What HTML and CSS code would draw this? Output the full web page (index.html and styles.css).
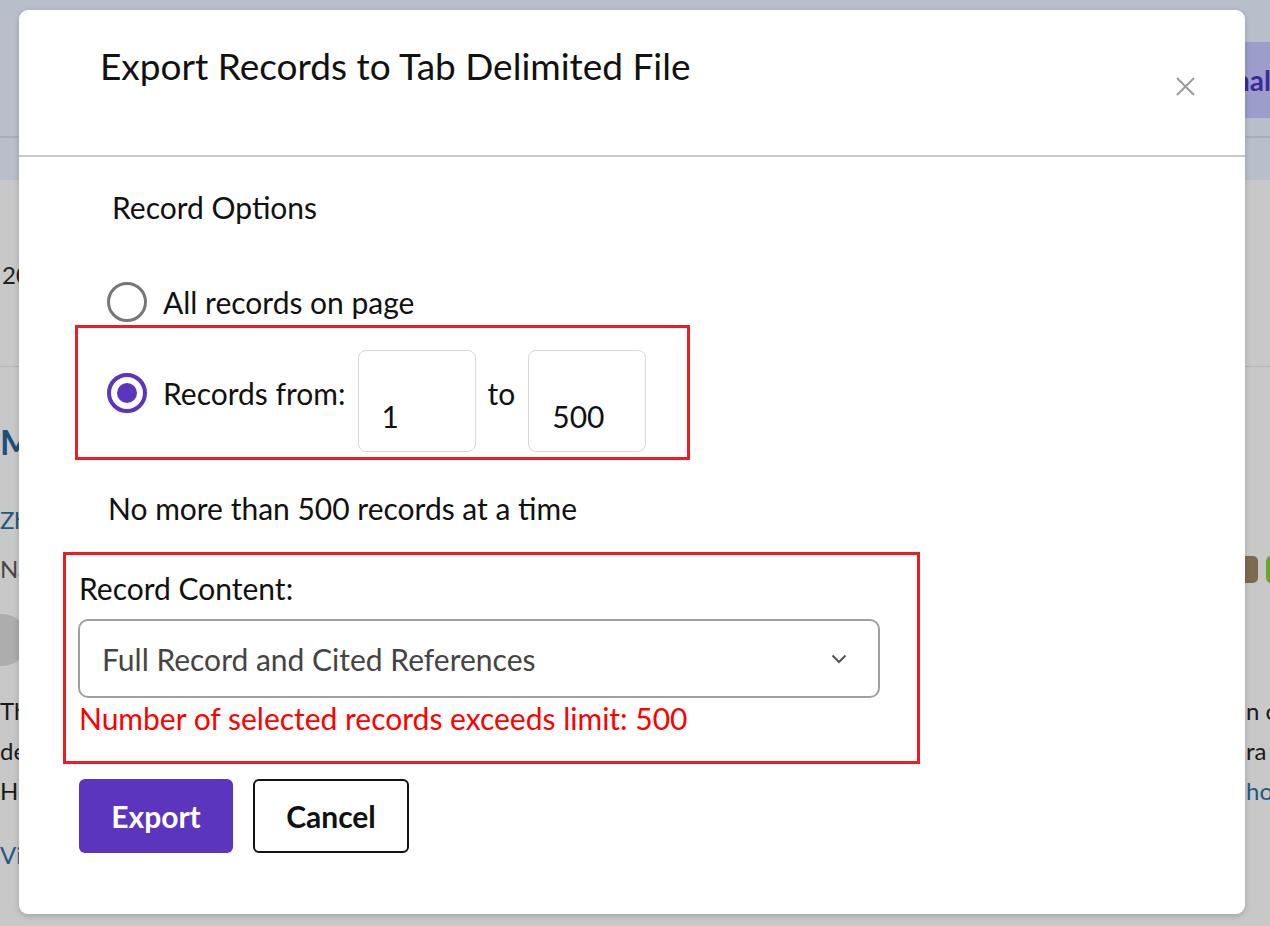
FILE: index.html
```html
<!DOCTYPE html>
<html lang="en">
<head>
<meta charset="utf-8">
<title>Export Records to Tab Delimited File</title>
<link rel="stylesheet" href="styles.css">
</head>
<body>
<div class="page">
  <header class="top">
    <div class="top-main">
      <span class="top-btn">Journal</span>
    </div>
    <div class="top-sub"></div>
  </header>
  <section class="summary">
    <div class="summary-text">2024 results</div>
  </section>
  <section class="result">
    <div class="r-title">Machine learning results</div>
    <div class="r-authors">Zhang, L.; Wang, Y.</div>
    <div class="r-meta"><span class="r-gray">Nature Communications</span><span class="pills"><span class="pill brown"></span><span class="pill green"></span></span></div>
    <div class="r-circle-row"><span class="r-circle"></span></div>
    <div class="r-line"><span>The study presents</span><span>n c</span></div>
    <div class="r-line"><span>demonstrates that</span><span>ra</span></div>
    <div class="r-line"><span>Here we show</span><span class="r-link">ho</span></div>
    <div class="r-view">View full text</div>
  </section>
</div>

<div class="modal" role="dialog" aria-labelledby="dlg-title">
  <div class="modal-header">
    <h1 id="dlg-title" class="modal-title">Export Records to Tab Delimited File</h1>
    <button class="close-btn" aria-label="Close">
      <svg width="19" height="19" viewBox="0 0 19 19"><path d="M1 1 L18 18 M18 1 L1 18" stroke="#9a9a9a" stroke-width="2" fill="none"/></svg>
    </button>
  </div>
  <div class="modal-body">
    <div class="section-title">Record Options</div>
    <div class="radio-row all">
      <span class="radio"></span>
      <span class="radio-label">All records on page</span>
    </div>
    <div class="red-box range">
      <span class="radio checked"></span>
      <span class="radio-label">Records from:</span>
      <span class="num-input first">1</span>
      <span class="to">to</span>
      <span class="num-input">500</span>
    </div>
    <div class="hint">No more than 500 records at a time</div>
    <div class="red-box content">
      <div class="field-label">Record Content:</div>
      <div class="select">
        <span class="select-text">Full Record and Cited References</span>
        <svg class="chev" width="16" height="10" viewBox="0 0 16 10"><path d="M1.5 1.5 L8 8 L14.5 1.5" stroke="#555" stroke-width="2" fill="none"/></svg>
      </div>
      <div class="error">Number of selected records exceeds limit: 500</div>
    </div>
    <div class="actions">
      <button class="btn primary">Export</button>
      <button class="btn secondary">Cancel</button>
    </div>
  </div>
</div>
</body>
</html>
```
FILE: styles.css
```css
html, body {
  margin: 0;
  padding: 0;
}
body {
  width: 1270px;
  height: 926px;
  overflow: hidden;
  background: #c8c8c8;
  font-family: "Lato", "Liberation Sans", sans-serif;
  position: relative;
}

/* background page (under overlay) */
.page {
  width: 1270px;
  overflow: hidden;
}
.top {
  background: #b9becb;
  height: 180px;
}
.top-main {
  height: 138px;
  border-bottom: 2px solid #a9aebb;
  box-sizing: border-box;
  display: flex;
  align-items: flex-start;
  justify-content: flex-end;
}
.top-btn {
  margin-top: 42px;
  height: 76px;
  width: 180px;
  margin-right: -80px;
  background: #9c9dcb;
  color: #3a2b98;
  font-weight: 700;
  font-size: 28px;
  line-height: 76px;
  padding-left: 10px;
  box-sizing: border-box;
  white-space: nowrap;
}
.summary {
  height: 187px;
  border-bottom: 1px solid #b3b3b3;
  box-sizing: border-box;
  padding-top: 78px;
}
.summary-text {
  font-size: 24px;
  line-height: 34px;
  color: #222;
  padding-left: 2px;
}
.result {
  font-size: 24px;
  color: #1a1a1a;
}
.r-title {
  margin-top: 55px;
  font-size: 34px;
  line-height: 40px;
  font-weight: 700;
  color: #1d4f7a;
}
.r-authors {
  margin-top: 38px;
  line-height: 40px;
  color: #1d5985;
}
.r-meta {
  margin-top: 9px;
  line-height: 40px;
  display: flex;
  justify-content: space-between;
  color: #454545;
}
.pills {
  display: flex;
  gap: 8px;
  margin-right: -16px;
  align-items: center;
}
.pill {
  width: 20px;
  height: 27px;
  border-radius: 5px;
}
.pill.brown { background: #7c6a51; }
.pill.green { background: #6aa82c; }
.r-circle-row {
  margin-top: 21px;
  height: 60px;
  display: flex;
  align-items: center;
}
.r-circle {
  width: 52px;
  height: 52px;
  border-radius: 50%;
  background: #adadad;
  margin-left: -24px;
}
.r-line {
  line-height: 40px;
  display: flex;
  justify-content: space-between;
  white-space: nowrap;
}
.r-circle-row + .r-line { margin-top: 21px; }
.r-line span:last-child {
  width: 24px;
  overflow: hidden;
}
.r-link { color: #1d5985; }
.r-view {
  margin-top: 24px;
  line-height: 40px;
  color: #1d5985;
}

/* modal */
.modal {
  position: absolute;
  left: 19px;
  top: 10px;
  width: 1226px;
  height: 904px;
  background: #fff;
  border-radius: 9px;
  box-shadow: 0 2px 6px rgba(0,0,0,0.18);
  color: #111;
}
.modal-header {
  border-bottom: 2px solid #c9c9c9;
  position: relative;
  padding: 36px 0 0 81px;
  height: 109px;
}
.modal-title {
  margin: 0;
  font-size: 37px;
  line-height: 40px;
  font-weight: 400;
  color: #111;
  white-space: nowrap;
}
.close-btn {
  position: absolute;
  left: 1157px;
  top: 67px;
  width: 19px;
  height: 19px;
  padding: 0;
  border: 0;
  background: none;
  display: block;
}
.close-btn svg { display: block; }

.modal-body {
  font-size: 30px;
  line-height: 32px;
}
.section-title {
  margin: 34px 0 0 93px;
}
.radio-row {
  display: flex;
  align-items: center;
  height: 40px;
}
.radio-row.all {
  margin: 59px 0 0 88px;
}
.radio {
  width: 40px;
  height: 40px;
  border-radius: 50%;
  border: 3px solid #777;
  box-sizing: border-box;
  flex: none;
  position: relative;
}
.radio.checked {
  border: 4px solid #5c35bf;
}
.radio.checked::after {
  content: "";
  position: absolute;
  left: 6px;
  top: 6px;
  width: 20px;
  height: 20px;
  border-radius: 50%;
  background: #5c35bf;
}
.radio-label {
  margin-left: 16px;
  white-space: nowrap;
}
.red-box {
  border: 3px solid #ee1c22;
  box-sizing: border-box;
}
.red-box.range {
  margin: 3px 0 0 56px;
  width: 615px;
  height: 135px;
  display: flex;
  align-items: center;
  padding-left: 29px;
}
.num-input {
  margin-top: 16px;
  width: 118px;
  height: 102px;
  border: 1px solid #d8d8d8;
  border-radius: 8px;
  box-sizing: border-box;
  padding: 49px 0 0 23px;
  flex: none;
}
.num-input.first {
  margin-left: 12px;
}
.to {
  margin: 0 13px 0 12px;
}
.hint {
  margin: 32px 0 0 89px;
}
.red-box.content {
  margin: 28px 0 0 44px;
  width: 857px;
  height: 212px;
  padding: 17px 0 0 13px;
}
.select {
  margin: 15px 0 0 -1px;
  width: 802px;
  height: 79px;
  border: 2px solid #a0a0a0;
  border-radius: 10px;
  box-sizing: border-box;
  display: flex;
  align-items: center;
  justify-content: space-between;
  padding: 0 31px 0 22px;
  color: #444;
}
.chev { display: block; }
.error {
  margin-top: 4px;
  color: #ff0000;
  white-space: nowrap;
}
.actions {
  margin: 15px 0 0 60px;
  display: flex;
  gap: 20px;
}
.btn {
  font-family: inherit;
  font-size: 30px;
  font-weight: 700;
  height: 74px;
  border-radius: 6px;
  box-sizing: border-box;
  padding: 0;
}
.btn.primary {
  width: 154px;
  background: #5c35bf;
  color: #fff;
  border: 0;
}
.btn.secondary {
  width: 156px;
  background: #fff;
  color: #111;
  border: 2px solid #111;
}
```
